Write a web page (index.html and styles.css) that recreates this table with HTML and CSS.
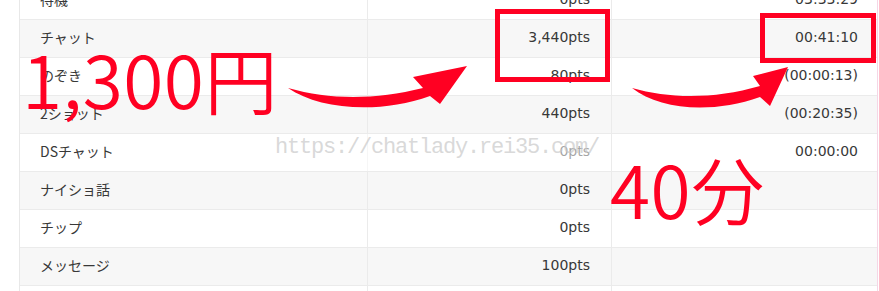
FILE: index.html
```html
<!DOCTYPE html>
<html lang="ja">
<head>
<meta charset="utf-8">
<link rel="stylesheet" href="styles.css">
</head>
<body>
<div class="page">
  <div class="table">
    <div class="row"><div class="cell name">待機</div><div class="cell num">0pts</div><div class="cell num">03:33:29</div></div>
    <div class="row alt"><div class="cell name">チャット</div><div class="cell num">3,440pts</div><div class="cell num">00:41:10</div></div>
    <div class="row"><div class="cell name">のぞき</div><div class="cell num">80pts</div><div class="cell num">(00:00:13)</div></div>
    <div class="row alt"><div class="cell name">2ショット</div><div class="cell num">440pts</div><div class="cell num">(00:20:35)</div></div>
    <div class="row"><div class="cell name">DSチャット</div><div class="cell num">0pts</div><div class="cell num">00:00:00</div></div>
    <div class="row alt"><div class="cell name">ナイショ話</div><div class="cell num">0pts</div><div class="cell num"></div></div>
    <div class="row"><div class="cell name">チップ</div><div class="cell num">0pts</div><div class="cell num"></div></div>
    <div class="row alt"><div class="cell name">メッセージ</div><div class="cell num">100pts</div><div class="cell num"></div></div>
    <div class="row"><div class="cell name"></div><div class="cell num"></div><div class="cell num"></div></div>
  </div>

  <div class="watermark">https://chatlady.rei35.com/</div>

  <svg class="marks" width="879" height="291" viewBox="0 0 879 291" xmlns="http://www.w3.org/2000/svg">
    <rect x="497.5" y="11.5" width="110" height="68" fill="none" stroke="#ff0022" stroke-width="5"/>
    <rect x="762.5" y="15.5" width="111" height="45" fill="none" stroke="#ff0022" stroke-width="5"/>
    <path d="M288,88 C320,110 380,114 430,96 L440,104 L467,66 L413,77 L423,88 C375,100 330,100 288,88 Z" fill="#ff0022"/>
    <path d="M632,88 C660,110 712,114 760,97 L770,106 L788,67 L753,76 L760,86 C715,99 670,99 632,88 Z" fill="#ff0022"/>
  </svg>

  <div class="big big-yen">1,300円</div>
  <div class="big big-min">40分</div>
</div>
</body>
</html>
```

FILE: styles.css
```css
html, body {
  margin: 0;
  padding: 0;
  background: #ffffff;
}

.page {
  position: relative;
  width: 879px;
  height: 291px;
  overflow: hidden;
}

.table {
  margin-top: -18px;
  margin-left: 19px;
  width: 857px;
  border-left: 1px solid #e8e8e8;
  border-right: 1px solid #f6d6e6;
  font-family: "DejaVu Sans", "Noto Sans CJK JP", sans-serif;
  font-size: 14px;
  color: #383838;
}

.row {
  display: grid;
  grid-template-columns: 348px 244px 1fr;
  height: 38px;
  box-sizing: border-box;
  border-bottom: 1px solid #ebebeb;
  background: #ffffff;
}

.row.alt {
  background: #f7f7f7;
}

.cell {
  display: flex;
  align-items: center;
  padding: 0 20px 3px 20px;
  border-right: 1px solid #ebebeb;
  white-space: nowrap;
}

.cell:last-child {
  border-right: none;
}

.name {
  justify-content: flex-start;
  font-family: "Noto Sans CJK JP", "DejaVu Sans", sans-serif;
}

.num {
  justify-content: flex-end;
  padding-right: 21px;
}

.cell:last-child.num {
  padding-right: 19px;
}

.watermark {
  position: absolute;
  left: 272px;
  top: 134px;
  width: 335px;
  height: 37px;
  padding-left: 3px;
  box-sizing: border-box;
  background: rgba(255, 255, 255, 0.55);
  font-family: "Liberation Mono", monospace;
  font-size: 22px;
  letter-spacing: -1.2px;
  line-height: 28px;
  color: rgba(200, 200, 200, 0.7);
  white-space: nowrap;
}

.marks {
  position: absolute;
  left: 0;
  top: 0;
}

.big {
  position: absolute;
  font-family: "Noto Sans CJK JP", sans-serif;
  font-weight: 350;
  font-size: 73px;
  letter-spacing: 0.5px;
  line-height: 1;
  color: #ff0022;
  white-space: nowrap;
}

.big-yen {
  left: 22px;
  top: 41px;
}

.big-min {
  left: 610px;
  top: 151px;
}
```
